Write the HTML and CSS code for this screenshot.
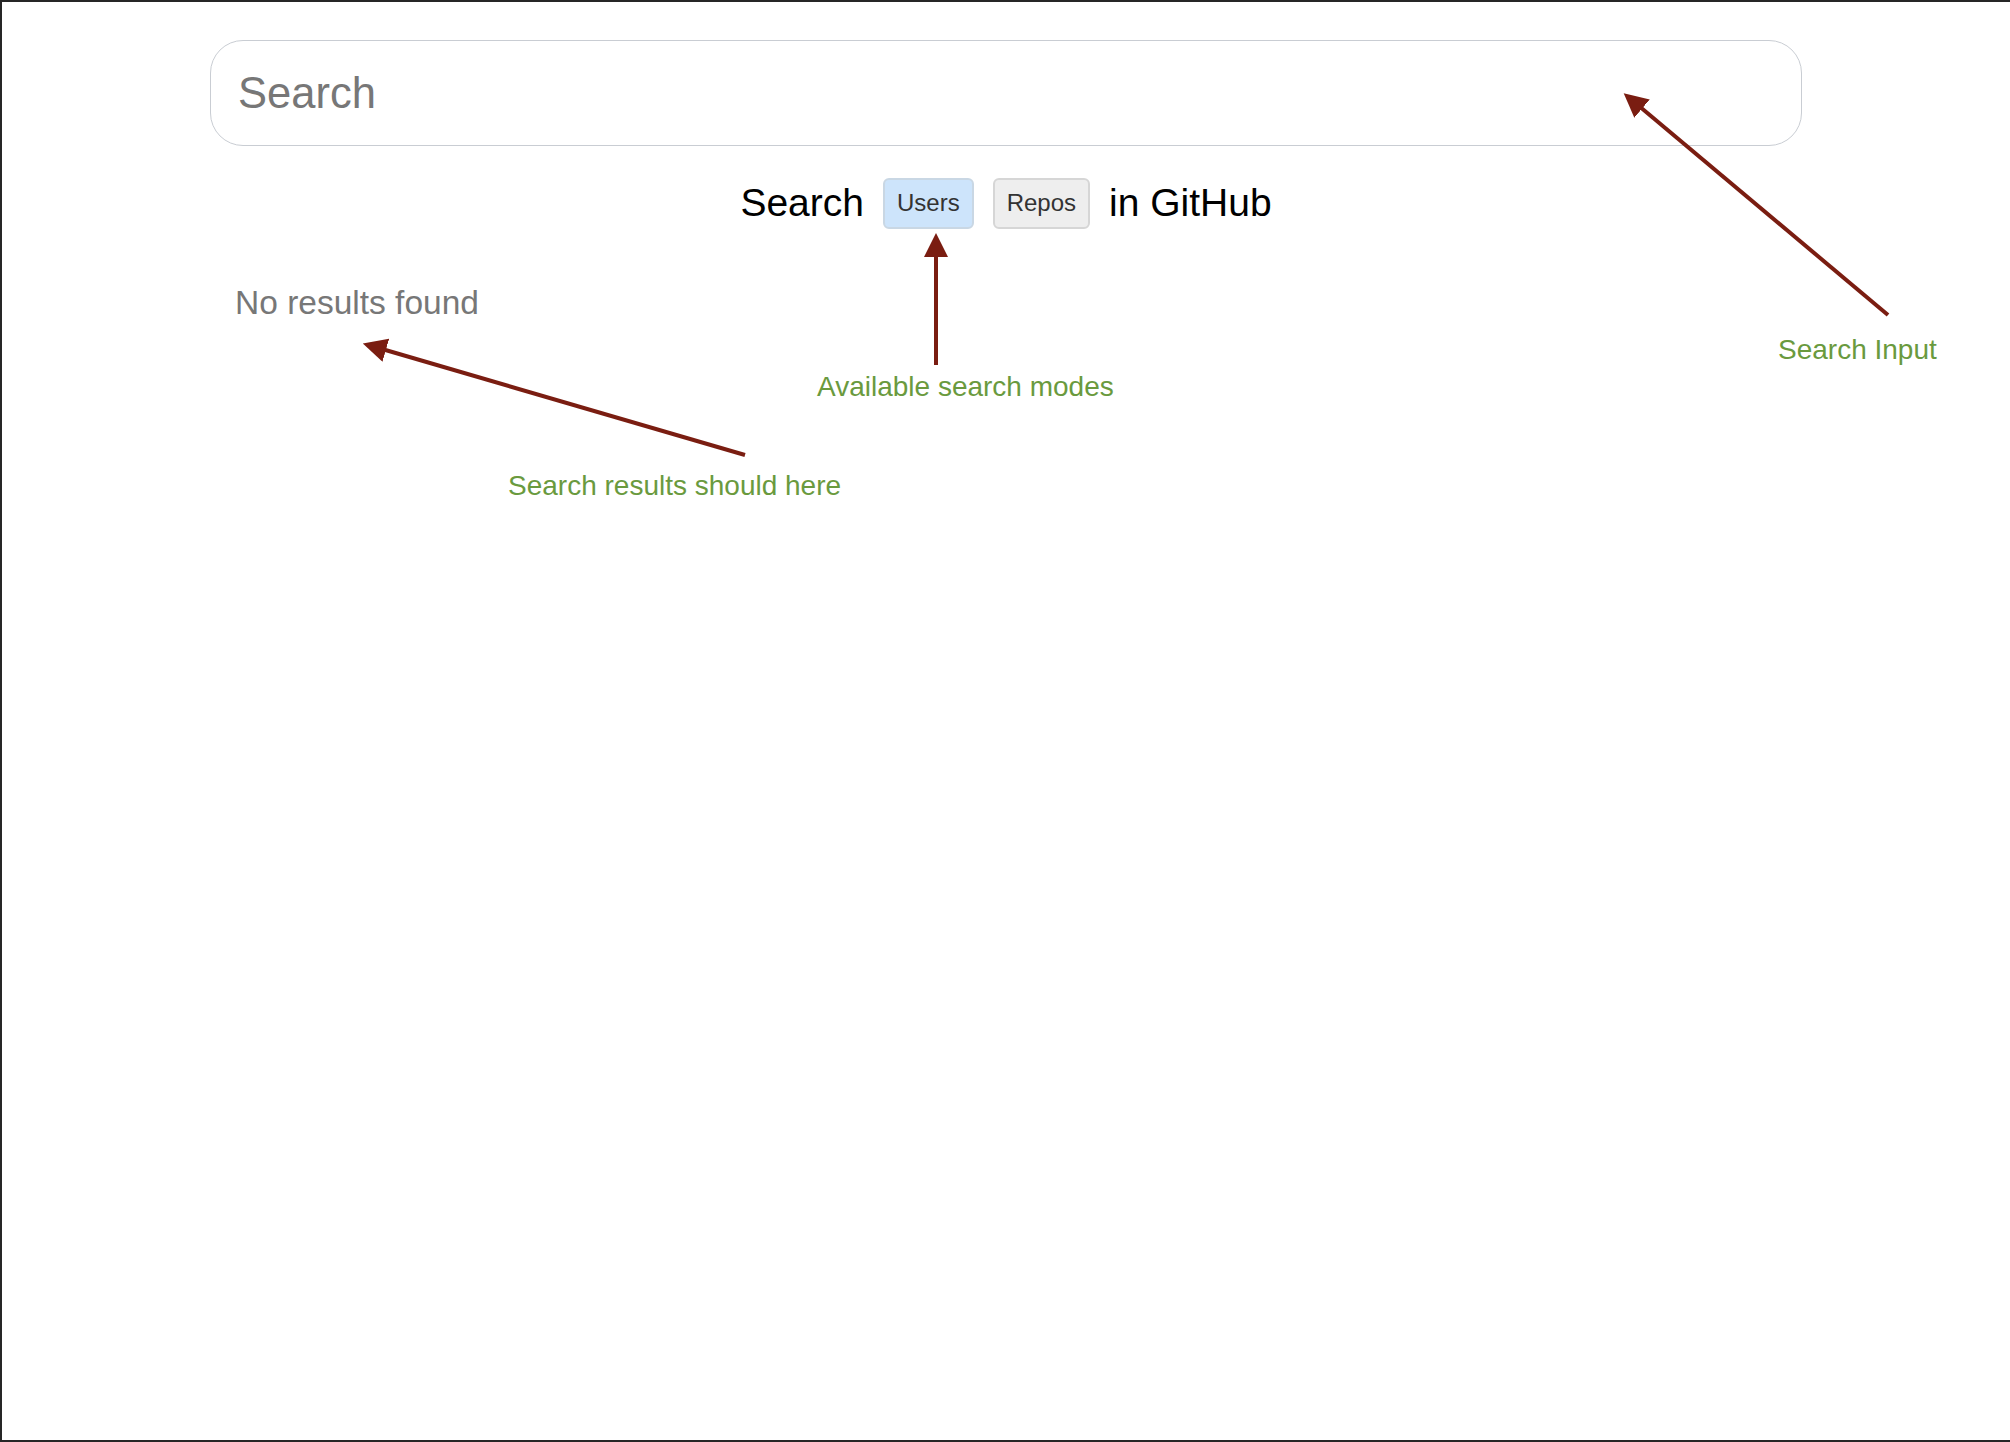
FILE: index.html
```html
<!DOCTYPE html>
<html>
<head>
<meta charset="utf-8">
<link rel="stylesheet" href="styles.css">
</head>
<body>
<div class="frame">
  <div class="search-wrap">
    <input class="search-input" type="text" placeholder="Search">
  </div>
  <div class="modes">
    <span class="modes-label">Search</span>
    <button class="mode mode-active">Users</button>
    <button class="mode">Repos</button>
    <span class="modes-label">in GitHub</span>
  </div>
  <div class="results">
    <p class="empty">No results found</p>
  </div>

  <svg class="annotations" width="2010" height="1442" viewBox="0 0 2010 1442">
    <defs>
      <marker id="head" markerWidth="6" markerHeight="6" refX="1" refY="3" orient="auto" markerUnits="strokeWidth">
        <path d="M0,0 L6,3 L0,6 Z" fill="#7a1d11"/>
      </marker>
    </defs>
    <line x1="1888" y1="315" x2="1639" y2="106" stroke="#7a1d11" stroke-width="4" marker-end="url(#head)"/>
    <line x1="936" y1="365" x2="936" y2="253" stroke="#7a1d11" stroke-width="4" marker-end="url(#head)"/>
    <line x1="745" y1="455" x2="382" y2="349" stroke="#7a1d11" stroke-width="4" marker-end="url(#head)"/>
  </svg>
  <span class="note note-input">Search Input</span>
  <span class="note note-modes">Available search modes</span>
  <span class="note note-results">Search results should here</span>
</div>
</body>
</html>
```

FILE: styles.css
```css
html, body {
  margin: 0;
  padding: 0;
  background: #ffffff;
}

.frame {
  position: relative;
  box-sizing: border-box;
  height: 1442px;
  border-top: 2px solid #262626;
  border-left: 2px solid #262626;
  border-bottom: 2px solid #262626;
  font-family: "Liberation Sans", Arial, Helvetica, sans-serif;
  overflow: hidden;
}

.search-wrap {
  width: 1592px;
  margin: 38px auto 0;
}

.search-input {
  display: block;
  box-sizing: border-box;
  width: 100%;
  height: 106px;
  padding: 0 27px;
  border: 1.5px solid #c9cdd3;
  border-radius: 33px;
  font-family: "Liberation Sans", Arial, sans-serif;
  font-size: 43.5px;
  color: #333;
  outline: none;
  background: #fff;
}

.search-input::placeholder {
  color: #777777;
}

.modes {
  display: flex;
  justify-content: center;
  align-items: center;
  gap: 19px;
  margin-top: 31px;
  height: 52px;
}

.modes-label {
  font-size: 39px;
  color: #000;
}

.mode {
  box-sizing: border-box;
  height: 51px;
  padding: 0 12px;
  border: 2px solid #d6d6d6;
  border-radius: 6px;
  background: #eeeeee;
  font-family: "Liberation Sans", Arial, sans-serif;
  font-size: 24px;
  color: #333;
}

.mode-active {
  background: #cde4fb;
  border-color: #c9d7e4;
}

.results {
  padding: 0 0 0 233px;
}

.empty {
  margin: 55px 0 0;
  font-size: 33.5px;
  color: #777777;
}

.annotations {
  position: absolute;
  left: -2px;
  top: -2px;
  pointer-events: none;
}

.note {
  position: absolute;
  font-size: 28px;
  color: #6a9a3e;
  white-space: nowrap;
}

.note-input {
  left: 1776px;
  top: 332px;
}

.note-modes {
  left: 815px;
  top: 369px;
}

.note-results {
  left: 506px;
  top: 468px;
}
```
